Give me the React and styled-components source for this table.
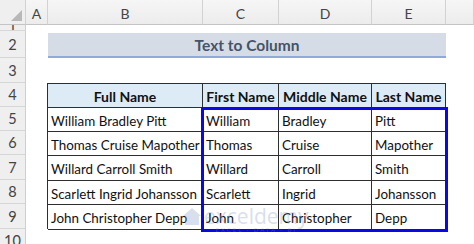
import React from "react";
import styled, { createGlobalStyle } from "styled-components";

const GlobalStyle = createGlobalStyle`
  html, body {
    margin: 0;
    padding: 0;
    background: #ffffff;
  }
  body {
    font-family: "Lato", "Liberation Sans", sans-serif;
    overflow: hidden;
  }
`;

const COLS = "26px 22px 155px 76px 93px 74px 1fr";
const ROWS = "25px 6px 27px 25px 24px 24px 24px 25px 24px 25px 24px";

const Sheet = styled.div`
  display: grid;
  grid-template-columns: ${COLS};
  grid-template-rows: ${ROWS};
  width: 474px;
  height: 244px;
  overflow: hidden;
  background: #ffffff;
`;

const Corner = styled.div`
  grid-column: 1;
  grid-row: 1;
  position: relative;
  background: #efefef;
  border-right: 1px solid #d2d2d2;
  border-bottom: 1px solid #c4c4c4;
  box-sizing: border-box;
`;

const Triangle = styled.div`
  position: absolute;
  right: 3px;
  bottom: 3px;
  width: 0;
  height: 0;
  border-left: 11px solid transparent;
  border-bottom: 11px solid #b8b8b8;
`;

const ColHead = styled.div`
  grid-row: 1;
  grid-column: ${(p) => p.$col};
  display: flex;
  align-items: center;
  justify-content: center;
  background: linear-gradient(#f6f6f6, #ececec);
  border-right: 1px solid #d2d2d2;
  border-bottom: 1px solid #c4c4c4;
  box-sizing: border-box;
  color: #444444;
  font-size: 14px;
  padding-top: 2px;
`;

const RowHead = styled.div`
  grid-column: 1;
  grid-row: ${(p) => p.$row};
  display: flex;
  align-items: ${(p) => (p.$cut ? "flex-end" : "center")};
  justify-content: center;
  overflow: hidden;
  background: #efefef;
  border-right: 1px solid #cfcfcf;
  border-bottom: 1px solid #d6d6d6;
  box-sizing: border-box;
  color: #444444;
  font-size: 14.5px;
  line-height: ${(p) => (p.$cut ? "8px" : "normal")};
`;

const TitleCell = styled.div`
  grid-column: 3 / 7;
  grid-row: 3;
  align-self: end;
  height: 25px;
  display: flex;
  align-items: center;
  justify-content: center;
  background: #d6dce5;
  border-bottom: 2px solid #8eaadb;
  box-sizing: border-box;
  color: #44546a;
  font-weight: 700;
  font-size: 15.5px;
`;

const TableWrap = styled.div`
  grid-column: 3 / 7;
  grid-row: 5 / 11;
  position: relative;
  display: grid;
  grid-template-columns: 155px 76px 93px 74px;
  grid-template-rows: 24px 24px 24px 25px 24px 25px;
  border-top: 1px solid #2e2e2e;
  border-left: 1px solid #2e2e2e;
  margin-left: -1px;
`;

const Cell = styled.div`
  display: flex;
  align-items: center;
  justify-content: ${(p) => (p.$head ? "center" : "flex-start")};
  padding: 2px 0 0 ${(p) => (p.$head ? "0" : "3px")};
  border-right: 1px solid #2e2e2e;
  border-bottom: 1px solid #2e2e2e;
  box-sizing: border-box;
  background: ${(p) => (p.$head ? "#ddebf7" : "#ffffff")};
  color: #111111;
  font-weight: ${(p) => (p.$head ? 700 : 400)};
  font-size: ${(p) => (p.$head ? "14px" : "13.4px")};
  white-space: nowrap;
  overflow: hidden;
`;

const Selection = styled.div`
  position: absolute;
  left: 153px;
  top: 23px;
  right: -2px;
  bottom: -3px;
  border: 3px solid #0808e8;
  pointer-events: none;
`;

const Watermark = styled.div`
  position: absolute;
  left: 134px;
  top: 122px;
  display: flex;
  align-items: flex-start;
  gap: 2px;
  opacity: 0.3;
  pointer-events: none;
`;

const MarkText = styled.div`
  display: flex;
  flex-direction: column;
  align-items: center;
  line-height: 1;
`;

const MarkName = styled.span`
  font-family: "Open Sans", "Liberation Sans", sans-serif;
  font-size: 21px;
  color: #7f97c4;
`;

const MarkSub = styled.span`
  font-size: 6px;
  letter-spacing: 2px;
  color: #7f97c4;
`;

const columns = ["A", "B", "C", "D", "E", ""];
const rowNums = [1, 2, 3, 4, 5, 6, 7, 8, 9, 10];

const headers = ["Full Name", "First Name", "Middle Name", "Last Name"];
const people = [
  ["William Bradley Pitt", "William", "Bradley", "Pitt"],
  ["Thomas Cruise Mapother", "Thomas", "Cruise", "Mapother"],
  ["Willard Carroll Smith", "Willard", "Carroll", "Smith"],
  ["Scarlett Ingrid Johansson", "Scarlett", "Ingrid", "Johansson"],
  ["John Christopher Depp", "John", "Christopher", "Depp"],
];

const App = () => (
  <>
    <GlobalStyle />
    <Sheet>
      <Corner>
        <Triangle />
      </Corner>
      {columns.map((c, i) => (
        <ColHead key={i} $col={i + 2}>
          {c}
        </ColHead>
      ))}
      {rowNums.map((n) => (
        <RowHead key={n} $row={n + 1} $cut={n === 1}>
          {n}
        </RowHead>
      ))}
      <TitleCell>Text to Column</TitleCell>
      <TableWrap>
        {headers.map((h) => (
          <Cell key={h} $head>
            {h}
          </Cell>
        ))}
        {people.map((row) =>
          row.map((v, i) => <Cell key={row[0] + i}>{v}</Cell>)
        )}
        <Selection />
        <Watermark>
          <svg width="20" height="20" viewBox="0 0 20 20">
            <path d="M1 10 L10 2 L19 10 L17 10 L17 19 L3 19 L3 10 Z" fill="#7f97c4" />
          </svg>
          <MarkText>
            <MarkName>exceldemy</MarkName>
            <MarkSub>EXCEL · DATA · BI</MarkSub>
          </MarkText>
        </Watermark>
      </TableWrap>
    </Sheet>
  </>
);

export default App;
